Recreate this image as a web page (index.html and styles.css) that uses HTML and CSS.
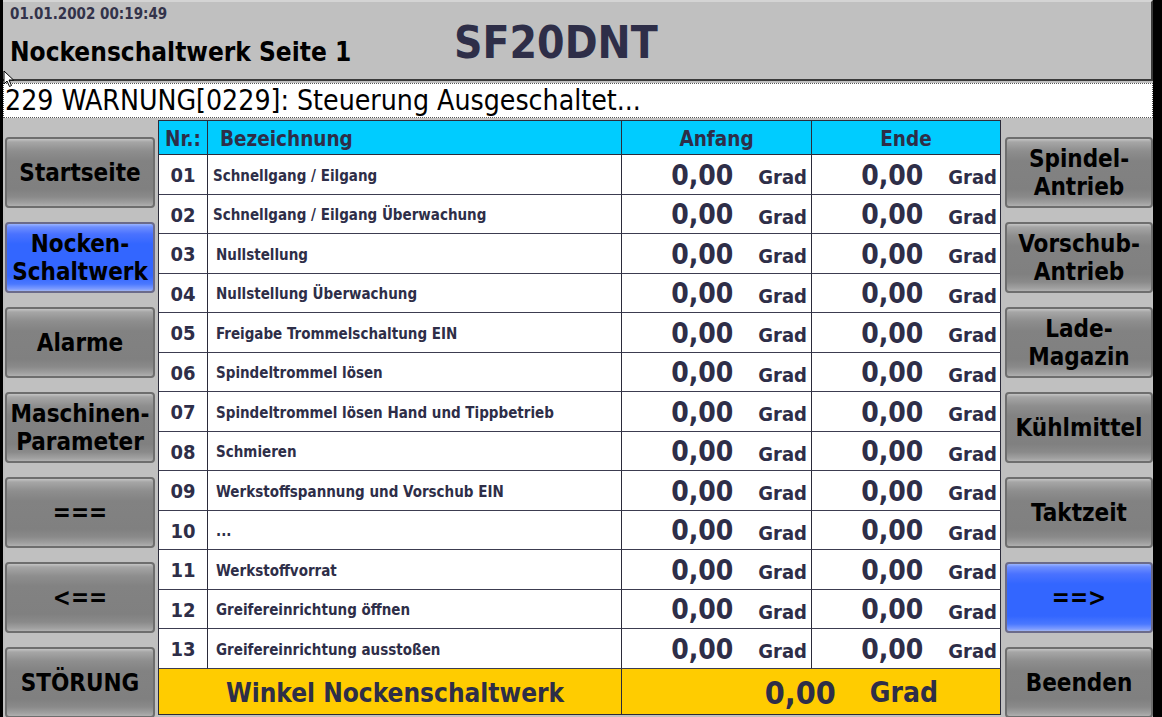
FILE: index.html
```html
<!DOCTYPE html>
<html lang="de">
<head>
<meta charset="utf-8">
<title>Nockenschaltwerk Seite 1</title>
<link rel="stylesheet" href="styles.css">
</head>
<body>
<div class="screen">
  <header class="top">
    <div class="top-left">
      <div class="date">01.01.2002 00:19:49</div>
      <div class="page-title">Nockenschaltwerk Seite 1</div>
    </div>
    <div class="machine">SF20DNT</div>
  </header>
  <div class="warning">229 WARNUNG[0229]: Steuerung Ausgeschaltet...</div>
  <svg class="cursor" width="12" height="18" viewBox="0 0 12 18"><path d="M1 1 L1 14 L4 11 L6.5 16.5 L8.5 15.5 L6 10 L10.5 10 Z" fill="#fff" stroke="#000" stroke-width="1"/></svg>
  <main class="main">
    <nav class="col col-left">
      <div class="btn">Startseite</div>
      <div class="btn btn-active">Nocken-<br>Schaltwerk</div>
      <div class="btn">Alarme</div>
      <div class="btn">Maschinen-<br>Parameter</div>
      <div class="btn">===</div>
      <div class="btn">&lt;==</div>
      <div class="btn">STÖRUNG</div>
    </nav>
    <section class="grid">
      <div class="hc hc-nr">Nr.:</div>
      <div class="hc hc-name">Bezeichnung</div>
      <div class="hc hc-mid">Anfang</div>
      <div class="hc hc-mid">Ende</div>

      <div class="c nr">01</div><div class="c name tight">Schnellgang / Eilgang</div><div class="c val"><span class="num">0,00</span><span class="unit">Grad</span></div><div class="c val val-end"><span class="num">0,00</span><span class="unit">Grad</span></div>
      <div class="c nr">02</div><div class="c name tight">Schnellgang / Eilgang Überwachung</div><div class="c val"><span class="num">0,00</span><span class="unit">Grad</span></div><div class="c val val-end"><span class="num">0,00</span><span class="unit">Grad</span></div>
      <div class="c nr">03</div><div class="c name">Nullstellung</div><div class="c val"><span class="num">0,00</span><span class="unit">Grad</span></div><div class="c val val-end"><span class="num">0,00</span><span class="unit">Grad</span></div>
      <div class="c nr">04</div><div class="c name">Nullstellung Überwachung</div><div class="c val"><span class="num">0,00</span><span class="unit">Grad</span></div><div class="c val val-end"><span class="num">0,00</span><span class="unit">Grad</span></div>
      <div class="c nr">05</div><div class="c name">Freigabe Trommelschaltung EIN</div><div class="c val"><span class="num">0,00</span><span class="unit">Grad</span></div><div class="c val val-end"><span class="num">0,00</span><span class="unit">Grad</span></div>
      <div class="c nr">06</div><div class="c name">Spindeltrommel lösen</div><div class="c val"><span class="num">0,00</span><span class="unit">Grad</span></div><div class="c val val-end"><span class="num">0,00</span><span class="unit">Grad</span></div>
      <div class="c nr">07</div><div class="c name">Spindeltrommel lösen Hand und Tippbetrieb</div><div class="c val"><span class="num">0,00</span><span class="unit">Grad</span></div><div class="c val val-end"><span class="num">0,00</span><span class="unit">Grad</span></div>
      <div class="c nr">08</div><div class="c name">Schmieren</div><div class="c val"><span class="num">0,00</span><span class="unit">Grad</span></div><div class="c val val-end"><span class="num">0,00</span><span class="unit">Grad</span></div>
      <div class="c nr">09</div><div class="c name">Werkstoffspannung und Vorschub EIN</div><div class="c val"><span class="num">0,00</span><span class="unit">Grad</span></div><div class="c val val-end"><span class="num">0,00</span><span class="unit">Grad</span></div>
      <div class="c nr">10</div><div class="c name">...</div><div class="c val"><span class="num">0,00</span><span class="unit">Grad</span></div><div class="c val val-end"><span class="num">0,00</span><span class="unit">Grad</span></div>
      <div class="c nr">11</div><div class="c name">Werkstoffvorrat</div><div class="c val"><span class="num">0,00</span><span class="unit">Grad</span></div><div class="c val val-end"><span class="num">0,00</span><span class="unit">Grad</span></div>
      <div class="c nr">12</div><div class="c name">Greifereinrichtung öffnen</div><div class="c val"><span class="num">0,00</span><span class="unit">Grad</span></div><div class="c val val-end"><span class="num">0,00</span><span class="unit">Grad</span></div>
      <div class="c nr">13</div><div class="c name">Greifereinrichtung ausstoßen</div><div class="c val"><span class="num">0,00</span><span class="unit">Grad</span></div><div class="c val val-end"><span class="num">0,00</span><span class="unit">Grad</span></div>

      <div class="fc fc-label">Winkel Nockenschaltwerk</div>
      <div class="fc fc-val"><span class="fnum">0,00</span><span class="funit">Grad</span></div>
    </section>
    <nav class="col col-right">
      <div class="btn">Spindel-<br>Antrieb</div>
      <div class="btn">Vorschub-<br>Antrieb</div>
      <div class="btn">Lade-<br>Magazin</div>
      <div class="btn">Kühlmittel</div>
      <div class="btn">Taktzeit</div>
      <div class="btn btn-active">==&gt;</div>
      <div class="btn">Beenden</div>
    </nav>
  </main>
</div>
</body>
</html>
```

FILE: styles.css
```css
html, body {
  margin: 0;
  padding: 0;
  background: #000;
}
body {
  width: 1162px;
  height: 717px;
  overflow: hidden;
  font-family: "DejaVu Sans Condensed", "DejaVu Sans", sans-serif;
}
.screen {
  position: relative;
  margin-left: 3px;
  width: 1150px;
  height: 717px;
  background: #c0c0c0;
  overflow: hidden;
}
.top {
  height: 81px;
  box-sizing: border-box;
  border-top: 2px solid #d4d4d4;
  border-bottom: 2px solid #3a3a3a;
  border-right: 2px solid #3a3a3a;
  background: #c0c0c0;
  display: flex;
  align-items: flex-start;
}
.top-left {
  width: 444px;
  padding-left: 7px;
}
.date {
  margin-top: 4px;
  font-size: 15px;
  font-weight: bold;
  color: #33334a;
  line-height: 16px;
}
.page-title {
  margin-top: 15px;
  font-size: 26px;
  font-weight: bold;
  color: #000;
  line-height: 30px;
}
.machine {
  margin-top: 15px;
  font-size: 44px;
  font-weight: bold;
  color: #2e2e48;
  line-height: 52px;
}
.warning {
  margin-top: 2px;
  height: 35px;
  box-sizing: border-box;
  width: 1150px;
  border: 1px dotted #555;
  background: #fff;
  font-size: 28.2px;
  line-height: 34px;
  padding-left: 1px;
  color: #000;
  white-space: nowrap;
  font-weight: normal;
}
.cursor {
  position: absolute;
  left: 0px;
  top: 70px;
}
.main {
  display: flex;
  align-items: flex-start;
  padding-top: 2px;
}
.col {
  display: flex;
  flex-direction: column;
  gap: 14px;
  padding-top: 17px;
}
.col-left {
  margin-left: 2px;
  width: 150px;
}
.col-right {
  margin-left: 4px;
  width: 148px;
}
.btn {
  height: 71px;
  box-sizing: border-box;
  border: 2px solid #6e6e6e;
  border-radius: 4px;
  background: linear-gradient(to bottom, #c4c4c4 0px, #a6a6a6 3px, #8e8e8e 12px, #828282 22px, #808080 50px, #8a8a8a 58px, #a0a0a0 64px, #b0b0b0 67px, #9a9a9a 100%);
  display: flex;
  align-items: center;
  justify-content: center;
  text-align: center;
  font-size: 24px;
  font-weight: bold;
  line-height: 28px;
  color: #000;
}
.btn-active {
  border-color: #6b6b8a;
  background: linear-gradient(to bottom, #9ab4ff 0px, #6e8fff 3px, #4a72ff 10px, #3366ff 20px, #3366ff 52px, #4a78ff 60px, #7e9cff 65px, #a0b4f0 67px, #8aa0e0 100%);
}
.grid {
  margin-left: 3px;
  display: grid;
  grid-template-columns: 49px 414px 190px 189px;
  grid-template-rows: 34px repeat(13, 39.5px) 46px;
  border-left: 1px solid #2b2b3a;
  border-top: 1px solid #2b2b3a;
  color: #2e2e48;
  font-weight: bold;
}
.hc, .c, .fc {
  box-sizing: border-box;
  border-right: 1px solid #2b2b3a;
  border-bottom: 1px solid #2b2b3a;
  display: flex;
  align-items: center;
  white-space: nowrap;
  overflow: hidden;
}
.hc {
  background: #00ccff;
  font-size: 20.5px;
  padding-top: 2px;
}
.hc-nr {
  justify-content: center;
}
.hc-name {
  padding-left: 12px;
}
.hc-mid {
  justify-content: center;
}
.c {
  background: #fff;
  border-bottom-color: #3c3c50;
  padding-top: 2px;
}
.nr {
  justify-content: center;
  font-size: 20px;
}
.name {
  font-size: 15px;
  padding-left: 8px;
  padding-top: 3px;
}
.name.tight {
  padding-left: 5px;
}
.val {
  justify-content: flex-end;
  gap: 25px;
  padding-right: 4px;
}
.val-end {
  padding-right: 3px;
}
.num {
  font-size: 28px;
}
.unit {
  font-size: 20px;
  padding-top: 4px;
}
.fc {
  background: #ffcc00;
  grid-column: span 2;
  padding-top: 3px;
}
.fc-label {
  justify-content: center;
  padding-left: 10px;
  font-size: 26px;
}
.fc-val {
  justify-content: flex-end;
  padding-right: 62px;
  gap: 34px;
}
.fnum {
  font-size: 32px;
}
.funit {
  font-size: 28px;
}
```
